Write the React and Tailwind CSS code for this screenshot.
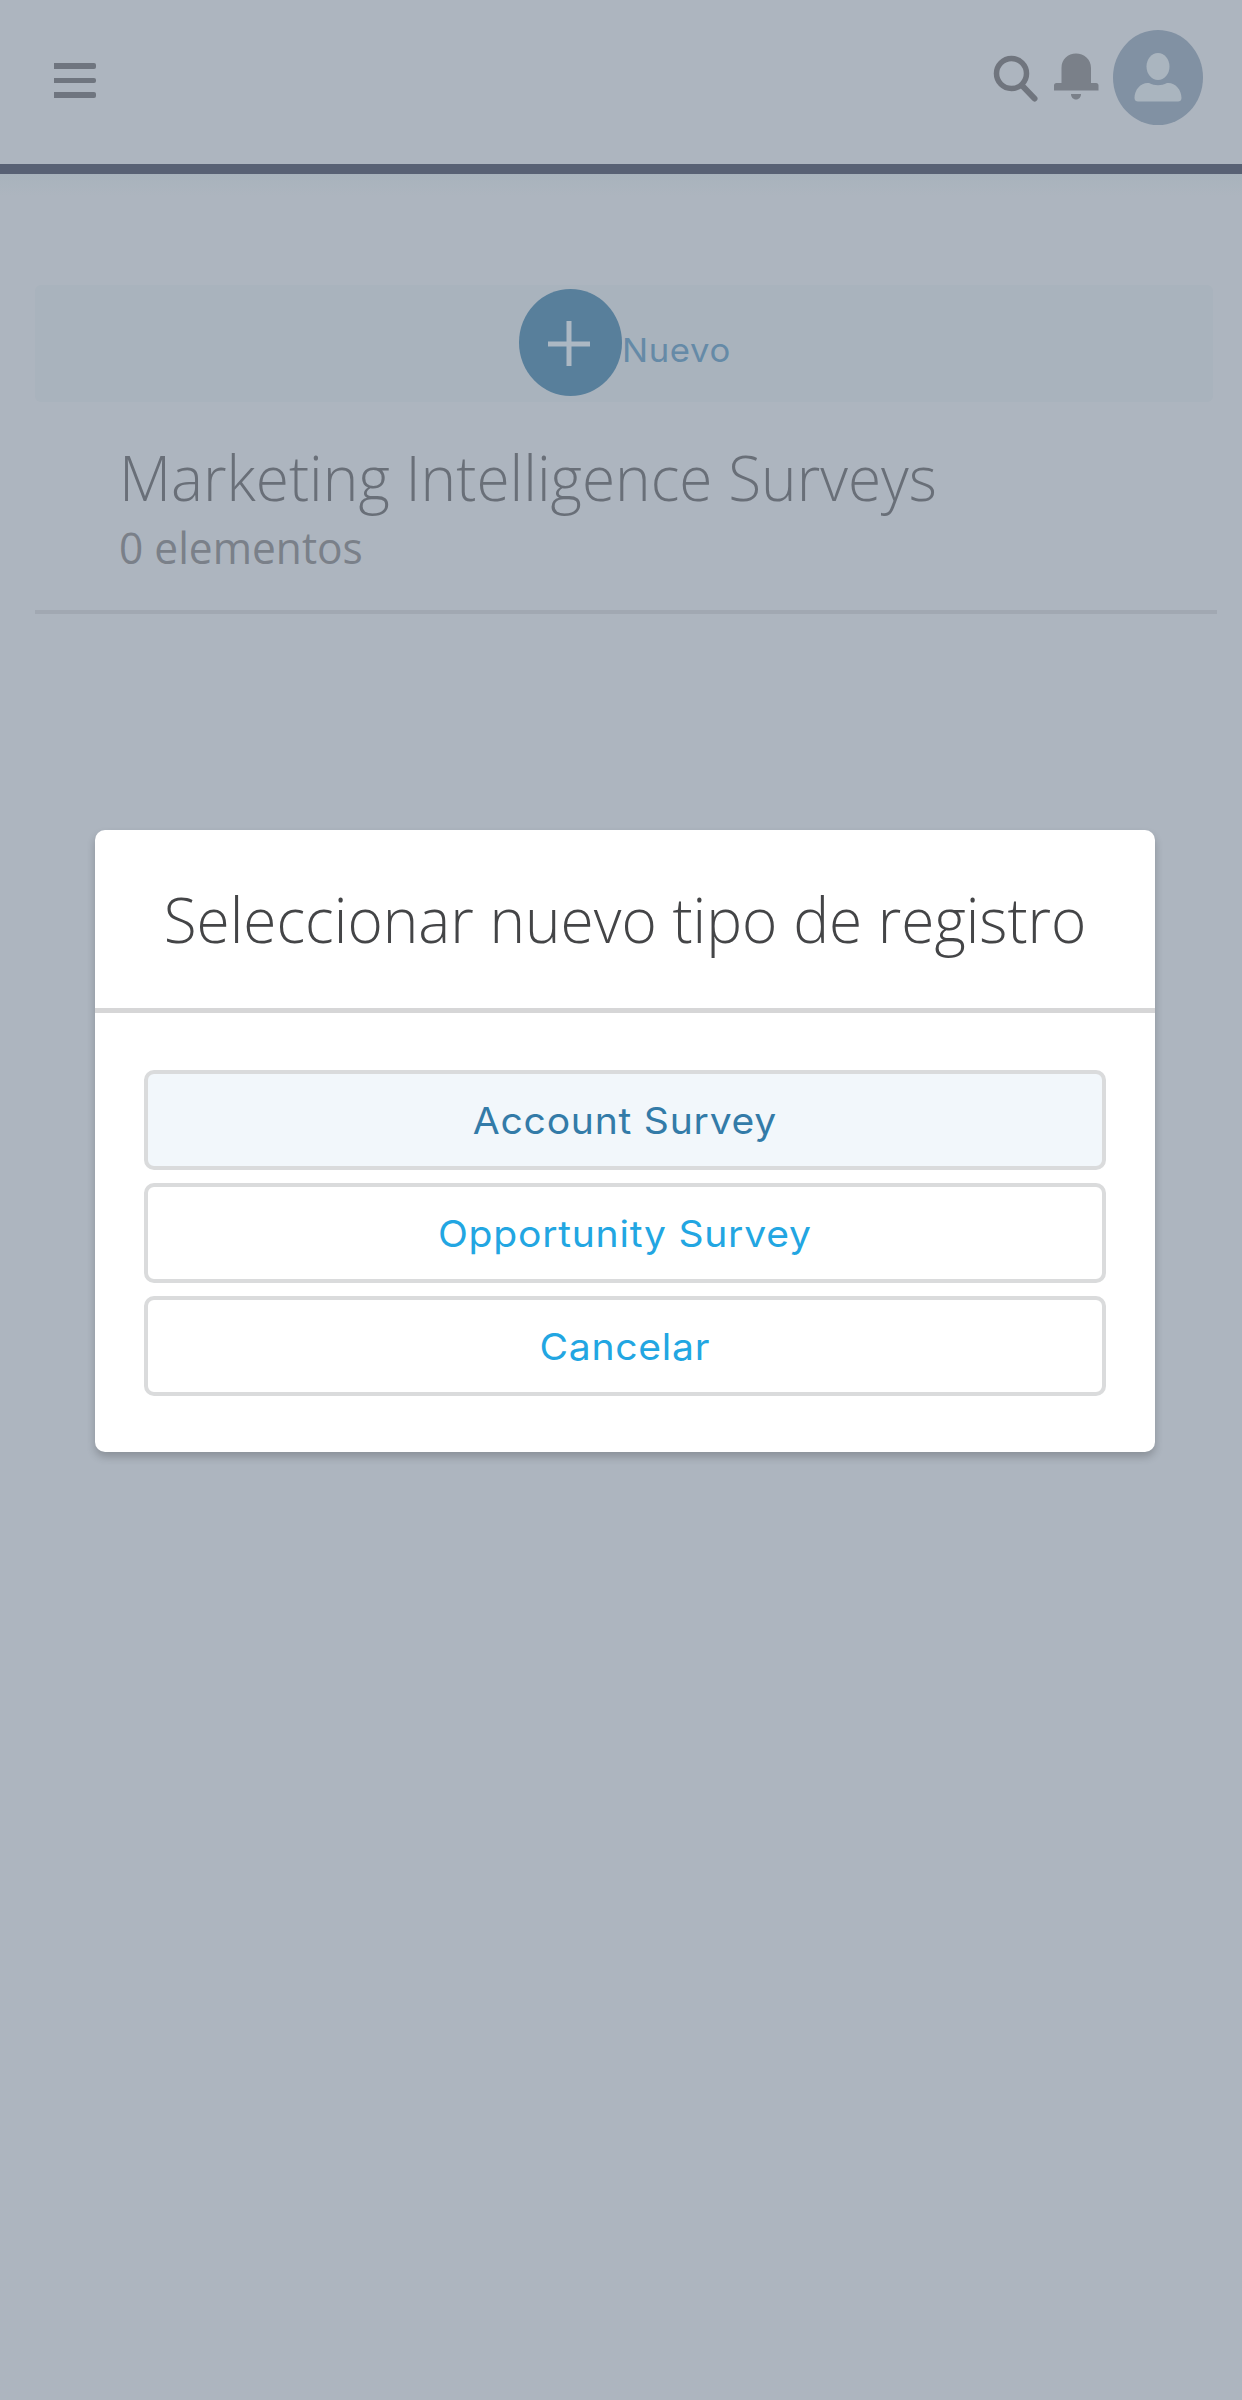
function Header() {
  return (
    <header className="flex h-[174px] items-start justify-between border-b-[10px] border-[#586174] pl-[54px] pr-[39px]">
      <button className="mt-[63px] flex w-[42px] flex-col gap-[9px]" aria-label="Menu">
        <span className="h-[6px] rounded-r-[2px] bg-[#6f757f]" />
        <span className="h-[5px] rounded-r-[2px] bg-[#6f757f]" />
        <span className="h-[6px] rounded-r-[2px] bg-[#6f757f]" />
      </button>
      <div className="flex">
        <svg className="mt-[53px] h-[50px] w-[50px]" viewBox="0 0 50 50" fill="none" stroke="#70757e" aria-hidden="true">
          <circle cx="21.500" cy="20.500" r="15" strokeWidth="5.500" />
          <path d="M33 33.500 44.500 45.500" strokeWidth="6" strokeLinecap="round" />
        </svg>
        <svg className="ml-[12px] mt-[50px] h-[52px] w-[48px]" viewBox="0 0 48 52" fill="#7a8089" aria-hidden="true">
          <path d="M9.500 33V18C9.500 9 16 3.500 24 3.500s15 5.500 15 14.500v15h5a2.500 2.500 0 0 1 2.500 2.500V40.500h-44.500v-5A2.500 2.500 0 0 1 4.500 33z" />
          <path d="M19 44h10c0 3-2 5.500-5 5.500s-5-2.500-5-5.500z" />
        </svg>
        <svg className="ml-[13px] mt-[30px] h-[95px] w-[90px]" viewBox="0 0 90 95" aria-hidden="true">
          <ellipse cx="45" cy="47.500" rx="45" ry="47.500" fill="#8191a3" />
          <ellipse cx="45" cy="36.500" rx="11.500" ry="13.500" fill="#aab5bf" />
          <path d="M21.500 68c0-9 7-16 14.500-15 6 3 12 3 18 0 7.500-1 14.500 6 14.500 15 0 2.500-1.500 3.500-3.500 3.500H25c-2 0-3.500-1-3.500-3.500z" fill="#aab5bf" />
        </svg>
      </div>
    </header>
  );
}

function RecordButton({ label, active }) {
  return (
    <button
      className={
        "flex h-[100px] w-full items-center justify-center rounded-[10px] border-[4px] border-[#dadbdc] font-['Inter',sans-serif] text-[37px] leading-none tracking-[0.7px] " +
        (active ? "bg-[#f2f7fb] text-[#337ba8]" : "bg-white text-[#22a6e2]")
      }
    >
      <span className="inline-block scale-x-[1.057]">{label}</span>
    </button>
  );
}

export default function App() {
  return (
    <div className="relative h-[2400px] w-[1242px] overflow-hidden bg-[#adb5bf] font-['Open_Sans',sans-serif]">
      <Header />
      <div className="h-[22px] bg-linear-to-b from-[#a8b3bc] to-[#adb5bf]" />
      <main className="px-[35px] pt-[89px]">
        <button className="flex h-[117px] w-[1178px] items-start rounded-[6px] bg-[#a9b3bd] pl-[484px] pt-[4px] text-[#658aa7]">
          <svg className="h-[108px] w-[103px]" viewBox="0 0 103 108" aria-hidden="true">
            <ellipse cx="51.500" cy="53.500" rx="51.500" ry="53.500" fill="#587f9b" />
            <path d="M29 55h42M50 32v45" stroke="#acb8c3" strokeWidth="5" />
          </svg>
          <span className="mt-[41px] origin-left scale-x-[1.05] font-['Inter',sans-serif] text-[33px] leading-[40px] tracking-[0.6px]">
            Nuevo
          </span>
        </button>
        <div className="flex h-[212px] w-[1182px] flex-col border-b-[4px] border-[#a1a8b2] pl-[84px] pt-[31px]">
          <h1 className="w-max origin-left scale-x-[0.958] text-[63px] leading-[88px] font-light text-[#696f78]">
            Marketing Intelligence Surveys
          </h1>
          <p className="-mt-[2px] w-max origin-left scale-x-[0.965] text-[44px] leading-[56px] text-[#7a8089]">0 elementos</p>
        </div>
      </main>
      <section
        className="absolute top-[830px] left-[95px] w-[1060px] rounded-[10px] bg-white shadow-[0_5px_9px_rgba(0,0,0,0.2)]"
        role="dialog"
      >
        <h2 className="flex h-[183px] items-center justify-center border-b-[5px] border-[#d6d6d7] text-[63px] font-light text-[#444547]">
          <span className="inline-block scale-x-[0.957] whitespace-nowrap">Seleccionar nuevo tipo de registro</span>
        </h2>
        <div className="flex h-[439px] flex-col gap-[13px] px-[49px] pt-[57px]">
          <RecordButton label="Account Survey" active />
          <RecordButton label="Opportunity Survey" />
          <RecordButton label="Cancelar" />
        </div>
      </section>
    </div>
  );
}
